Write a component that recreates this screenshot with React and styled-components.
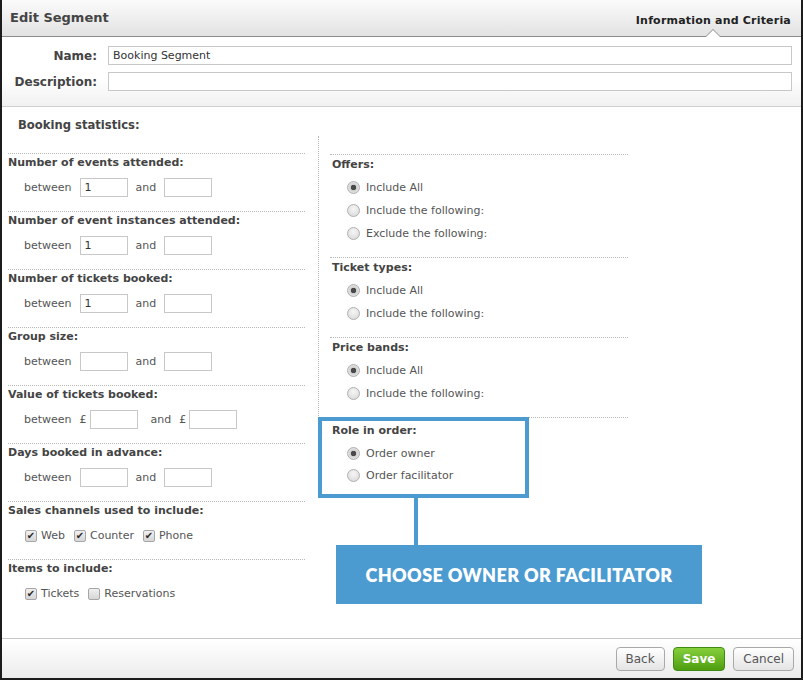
import React from 'react';
import styled, { createGlobalStyle } from 'styled-components';

const GlobalStyle = createGlobalStyle`
  html, body {
    margin: 0;
    padding: 0;
    background: #fff;
  }
  body {
    font-family: 'DejaVu Sans', Verdana, sans-serif;
    font-size: 11px;
    color: #555;
  }
`;

const leftSections = [
  { title: 'Number of events attended:', from: '1' },
  { title: 'Number of event instances attended:', from: '1' },
  { title: 'Number of tickets booked:', from: '1' },
  { title: 'Group size:', from: '' },
  { title: 'Value of tickets booked:', from: '', money: true },
  { title: 'Days booked in advance:', from: '' },
];

const radioSections = [
  { title: 'Offers:', options: ['Include All', 'Include the following:', 'Exclude the following:'] },
  { title: 'Ticket types:', options: ['Include All', 'Include the following:'] },
  { title: 'Price bands:', options: ['Include All', 'Include the following:'] },
];

const RadioOption = ({ label, checked }) => (
  <OptionRow>
    <Radio $checked={checked} />
    <span>{label}</span>
  </OptionRow>
);

const CheckOption = ({ label, checked }) => (
  <CheckItem>
    <Checkbox $checked={checked}>{checked ? '\u2714' : ''}</Checkbox>
    <span>{label}</span>
  </CheckItem>
);

const App = () => (
  <>
    <GlobalStyle />
    <Dialog>
      <Header>
        <Title>Edit Segment</Title>
        <Tab>Information and Criteria</Tab>
      </Header>

      <InfoForm>
        <FieldRow>
          <FieldLabel>Name:</FieldLabel>
          <TextField readOnly value="Booking Segment" />
        </FieldRow>
        <FieldRow>
          <FieldLabel>Description:</FieldLabel>
          <TextField readOnly value="" />
        </FieldRow>
      </InfoForm>

      <Body>
        <BodyTitle>Booking statistics:</BodyTitle>
        <Columns>
          <LeftColumn>
            { leftSections.map(({ title, from, money }) => (
              <Section key={title}>
                <SectionLabel>{ title }</SectionLabel>
                <RangeRow>
                  <RangeText>between</RangeText>
                  { money && <Currency>£</Currency> }
                  <SmallInput readOnly value={from} />
                  <RangeText $wide={money}>and</RangeText>
                  { money && <Currency>£</Currency> }
                  <SmallInput readOnly value="" />
                </RangeRow>
              </Section>
            ))}
            <Section>
              <SectionLabel>Sales channels used to include:</SectionLabel>
              <CheckRow>
                <CheckOption label="Web" checked />
                <CheckOption label="Counter" checked />
                <CheckOption label="Phone" checked />
              </CheckRow>
            </Section>
            <Section>
              <SectionLabel>Items to include:</SectionLabel>
              <CheckRow>
                <CheckOption label="Tickets" checked />
                <CheckOption label="Reservations" />
              </CheckRow>
            </Section>
          </LeftColumn>

          <RightColumn>
            <CriteriaList>
              { radioSections.map(({ title, options }) => (
                <RadioSection key={title}>
                  <SectionLabel>{ title }</SectionLabel>
                  { options.map((opt, i) => (
                    <RadioOption key={opt} label={opt} checked={i === 0} />
                  ))}
                </RadioSection>
              ))}
              <Highlight>
                <SectionLabel>Role in order:</SectionLabel>
                <CompactOption>
                  <Radio $checked />
                  <span>Order owner</span>
                </CompactOption>
                <CompactOption>
                  <Radio />
                  <span>Order facilitator</span>
                </CompactOption>
              </Highlight>
            </CriteriaList>
            <Connector />
            <Callout>Choose owner or facilitator</Callout>
          </RightColumn>
        </Columns>
      </Body>

      <Footer>
        <Button>Back</Button>
        <Button $primary>Save</Button>
        <Button>Cancel</Button>
      </Footer>
    </Dialog>
  </>
);

const Dialog = styled.div`
  box-sizing: border-box;
  width: 803px;
  height: 680px;
  border: 2px solid #1c1c1c;
  border-top: none;
  display: flex;
  flex-direction: column;
  background: #fff;
  overflow: hidden;
`;

const Header = styled.div`
  height: 36px;
  flex-shrink: 0;
  display: flex;
  align-items: stretch;
  justify-content: space-between;
  padding: 0 10px 0 8px;
  background: linear-gradient(#fbfbfb, #e2e2e2);
  border-bottom: 1px solid #8c8c8c;
`;

const Title = styled.div`
  display: flex;
  align-items: center;
  padding-bottom: 2px;
  font-size: 13px;
  font-weight: bold;
  color: #444;
`;

const Tab = styled.div`
  position: relative;
  display: flex;
  align-items: center;
  padding-top: 4px;
  font-size: 11px;
  font-weight: bold;
  letter-spacing: 0.2px;
  color: #222;

  &::before, &::after {
    content: '';
    position: absolute;
    left: 50%;
    width: 0;
    height: 0;
    border-style: solid;
    border-color: transparent;
  }
  &::before {
    bottom: -1px;
    margin-left: -8px;
    border-width: 0 8px 8px 8px;
    border-bottom-color: #8c8c8c;
  }
  &::after {
    bottom: -1px;
    margin-left: -7px;
    border-width: 0 7px 7px 7px;
    border-bottom-color: #fff;
  }
`;

const InfoForm = styled.div`
  flex-shrink: 0;
  display: flex;
  flex-direction: column;
  gap: 7px;
  padding: 9px 9px 15px 0;
  background: linear-gradient(#fff 60%, #f1f1f1);
  border-bottom: 1px solid #cfcfcf;
`;

const FieldRow = styled.div`
  display: flex;
  align-items: center;
`;

const FieldLabel = styled.label`
  width: 95px;
  margin-right: 11px;
  text-align: right;
  font-size: 12px;
  font-weight: bold;
  color: #444;
`;

const TextField = styled.input`
  flex: 1;
  box-sizing: border-box;
  height: 19px;
  padding: 0 4px;
  border: 1px solid #c8c8c8;
  font-family: 'DejaVu Sans', Verdana, sans-serif;
  font-size: 11px;
  color: #333;
  outline: none;
`;

const Body = styled.div`
  flex: 1;
  padding: 11px 0 0 6px;
`;

const BodyTitle = styled.div`
  margin-left: 10px;
  line-height: 14px;
  font-size: 11.6px;
  font-weight: bold;
  color: #444;
`;

const Columns = styled.div`
  display: flex;
  gap: 13px;
  margin-top: 4px;
`;

const LeftColumn = styled.div`
  width: 297px;
  padding-top: 17px;
`;

const Section = styled.div`
  border-top: 1px dotted #b8b8b8;
  padding: 2px 0 14px;
`;

const SectionLabel = styled.div`
  line-height: 14px;
  font-weight: bold;
  color: #444;
`;

const RangeRow = styled.div`
  display: flex;
  align-items: center;
  height: 19px;
  margin-top: 8px;
  padding-left: 16px;
`;

const RangeText = styled.span`
  margin-right: 8px;
  margin-left: ${p => (p.$wide ? '5px' : '0')};
`;

const Currency = styled.span`
  margin-right: 3px;
`;

const SmallInput = styled.input`
  box-sizing: border-box;
  width: 48px;
  height: 19px;
  margin-right: 8px;
  padding: 0 4px;
  border: 1px solid #c8c8c8;
  font-family: 'DejaVu Sans', Verdana, sans-serif;
  font-size: 11px;
  color: #333;
  outline: none;
`;

const CheckRow = styled.div`
  display: flex;
  align-items: center;
  height: 19px;
  margin-top: 8px;
  padding-left: 17px;
  gap: 9px;
`;

const CheckItem = styled.span`
  display: flex;
  align-items: center;
  gap: 4px;
`;

const Checkbox = styled.span`
  box-sizing: border-box;
  width: 12px;
  height: 12px;
  border: 1px solid #a6a6a6;
  border-radius: 2px;
  background: linear-gradient(#f0f0f0, #d6d6d6);
  display: flex;
  align-items: center;
  justify-content: center;
  font-size: 10px;
  line-height: 1;
  color: #2a2a2a;
`;

const RightColumn = styled.div`
  flex: 1;
  display: flex;
  flex-direction: column;
  align-items: flex-start;
`;

const CriteriaList = styled.div`
  border-left: 1px dotted #b8b8b8;
  padding-top: 18px;
`;

const RadioSection = styled.div`
  width: 296px;
  margin-left: 11px;
  padding: 3px 0 12px 2px;
  border-top: 1px dotted #b8b8b8;

  & > div:first-child {
    margin-bottom: 4px;
  }

  &:nth-child(3) {
    border-bottom: 1px dotted #b8b8b8;
  }
`;

const OptionRow = styled.div`
  display: flex;
  align-items: center;
  gap: 6px;
  height: 23px;
  padding-left: 15px;
`;

const CompactOption = styled(OptionRow)`
  height: 22px;
`;

const Radio = styled.span`
  box-sizing: border-box;
  width: 13px;
  height: 13px;
  border-radius: 50%;
  border: 1px solid #b0b0b0;
  background: ${p => (p.$checked
    ? 'radial-gradient(circle, #4a4a4a 0 2.5px, #cfcfcf 3px, #e6e6e6 6px)'
    : 'radial-gradient(circle at 50% 35%, #f6f6f6, #d6d6d6)')};
`;

const Highlight = styled.div`
  box-sizing: border-box;
  width: 211px;
  margin: -1px 0 0 -1px;
  padding: 3px 8px 8px 10px;
  border: 4px solid #4b9bd1;
  background: #fff;

  & > div:first-child {
    margin-bottom: 4px;
  }
`;

const Connector = styled.div`
  width: 4px;
  height: 47px;
  margin-left: 96px;
  background: #4b9bd1;
`;

const Callout = styled.div`
  width: 366px;
  height: 59px;
  margin-left: 18px;
  display: flex;
  align-items: center;
  justify-content: center;
  background: #4b9bd1;
  color: #fff;
  font-family: Lato, 'Open Sans', sans-serif;
  font-weight: 800;
  font-size: 18px;
  text-transform: uppercase;
  letter-spacing: 0.4px;
`;

const Footer = styled.div`
  flex-shrink: 0;
  height: 39px;
  display: flex;
  align-items: center;
  justify-content: flex-end;
  gap: 8px;
  padding: 0 7px 0 0;
  border-top: 1px solid #c8c8c8;
  background: linear-gradient(#fff, #ececec);
`;

const Button = styled.button`
  box-sizing: border-box;
  height: 24px;
  padding: 0 9px;
  border-radius: 4px;
  border: 1px solid ${p => (p.$primary ? '#3e8a12' : '#a9a9a9')};
  background: ${p => (p.$primary
    ? 'linear-gradient(#86cf3c, #4e9e10)'
    : 'linear-gradient(#fff, #e4e4e4)')};
  color: ${p => (p.$primary ? '#fff' : '#555')};
  font-family: 'DejaVu Sans', Verdana, sans-serif;
  font-size: 12px;
  font-weight: ${p => (p.$primary ? 'bold' : 'normal')};
  cursor: pointer;
`;

export default App;
